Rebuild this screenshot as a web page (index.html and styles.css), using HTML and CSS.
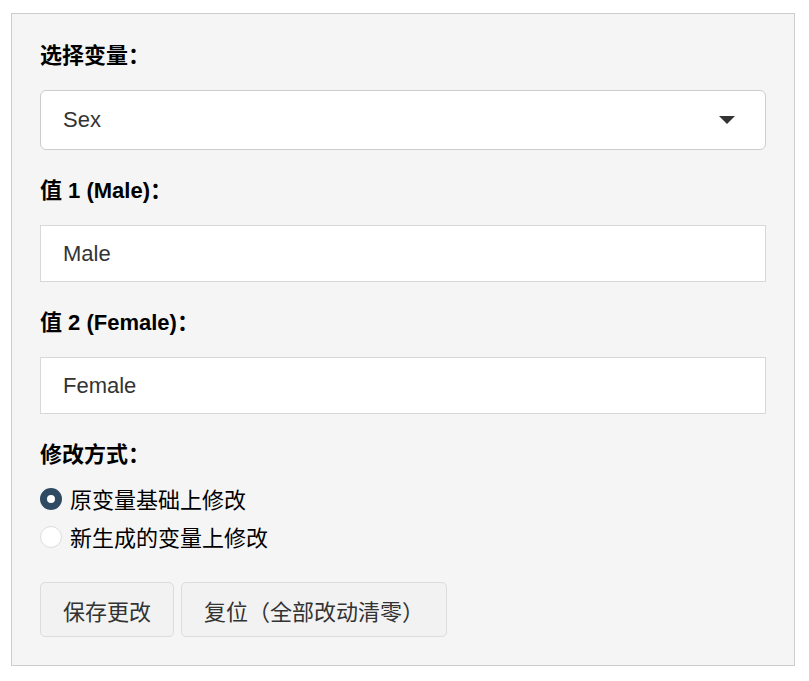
FILE: index.html
```html
<!DOCTYPE html>
<html lang="zh-CN">
<head>
    <meta charset="UTF-8">
    <title>修改变量</title>
    <link rel="stylesheet" href="styles.css">
</head>
<body>
    <!-- Recode panel -->
    <div class="well">
        <div class="form-group">
            <label class="control-label">选择变量：</label>
            <div class="select-box">
                <span class="select-value">Sex</span>
                <span class="caret"></span>
            </div>
        </div>

        <div class="form-group">
            <label class="control-label" for="val1">值 1 (Male)：</label>
            <input class="text-input" type="text" id="val1" value="Male">
        </div>

        <div class="form-group">
            <label class="control-label" for="val2">值 2 (Female)：</label>
            <input class="text-input" type="text" id="val2" value="Female">
        </div>

        <div class="form-group radio-group">
            <label class="control-label">修改方式：</label>
            <div class="radio-list">
                <div class="radio-row">
                    <span class="radio-dot checked"></span>
                    <span class="radio-text">原变量基础上修改</span>
                </div>
                <div class="radio-row">
                    <span class="radio-dot"></span>
                    <span class="radio-text">新生成的变量上修改</span>
                </div>
            </div>
        </div>

        <div class="button-row">
            <button class="btn">保存更改</button>
            <button class="btn">复位（全部改动清零）</button>
        </div>
    </div>
</body>
</html>
```

FILE: styles.css
```css
/* Global styles */
body {
    margin: 0;
    padding: 0;
    background-color: #fff;
    font-family: "Liberation Sans", "Noto Sans CJK SC", sans-serif;
    font-size: 22px;
    color: #000;
}

/* Panel */
.well {
    box-sizing: border-box;
    width: 784px;
    margin: 13px 0 0 11px;
    padding: 28px;
    background-color: #f5f5f5;
    border: 1px solid #cccccc;
}

.form-group {
    margin-bottom: 27px;
}

.radio-group {
    margin-bottom: 26px;
}

.control-label {
    display: block;
    font-weight: bold;
    line-height: 28px;
    margin-bottom: 20px;
}

/* Select box */
.select-box {
    box-sizing: border-box;
    height: 60px;
    display: flex;
    align-items: center;
    justify-content: space-between;
    padding: 0 30px 0 22px;
    background-color: #fff;
    border: 1px solid #cccccc;
    border-radius: 6px;
    color: #333;
}

.caret {
    width: 0;
    height: 0;
    border-left: 8px solid transparent;
    border-right: 8px solid transparent;
    border-top: 8px solid #333;
}

/* Text inputs */
.text-input {
    display: block;
    box-sizing: border-box;
    width: 100%;
    height: 57px;
    margin: 0;
    padding: 0 22px;
    font-family: "Liberation Sans", "Noto Sans CJK SC", sans-serif;
    font-size: 22px;
    color: #333;
    background-color: #fff;
    border: 1px solid #d7d7dc;
    border-radius: 0;
    outline: none;
}

/* Radio buttons */
.control-label + .radio-list {
    margin-top: -9px;
}

.radio-row {
    display: flex;
    align-items: center;
    height: 38px;
    gap: 8px;
}

.radio-text {
    margin-top: -3px;
}

.radio-dot {
    box-sizing: border-box;
    width: 22px;
    height: 22px;
    border-radius: 50%;
    background-color: #fff;
    border: 1px solid #dddddd;
}

.radio-dot.checked {
    border: 7px solid #2f4a63;
}

/* Buttons */
.button-row {
    display: flex;
    gap: 7px;
}

.btn {
    box-sizing: border-box;
    height: 55px;
    padding: 0 22px;
    font-family: "Liberation Sans", "Noto Sans CJK SC", sans-serif;
    font-size: 22px;
    color: #333;
    background-color: #f2f2f2;
    border: 1px solid #dcdcdc;
    border-radius: 5px;
}
```
